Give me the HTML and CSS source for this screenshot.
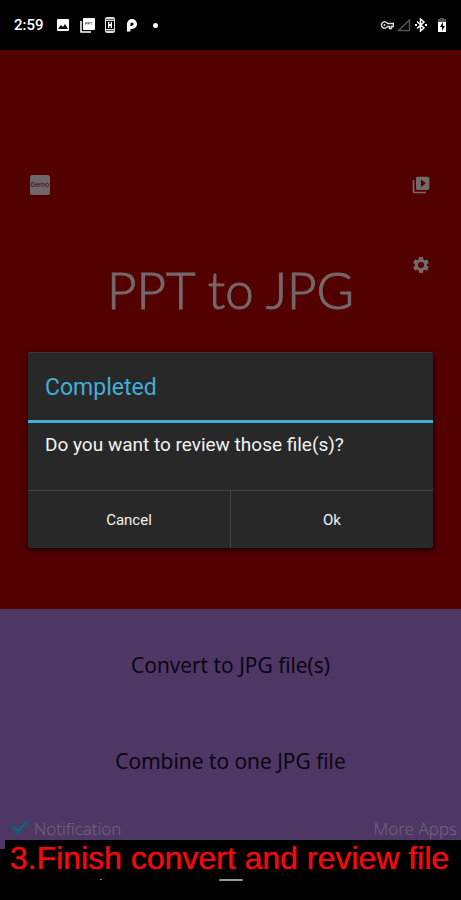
FILE: index.html
```html
<!DOCTYPE html>
<html lang="en">
<head>
	<meta charset="UTF-8">
	<meta name="viewport" content="width=device-width, initial-scale=1.0">
	<title>PPT to JPG</title>
	<link rel="stylesheet" href="styles.css">
</head>
<body>

<!-- Status bar -->
<header class="status-bar">
	<span class="clock">2:59</span>
	<div class="status-left">
		<svg width="14" height="14" viewBox="0 0 14 14"><rect x="1" y="1" width="12" height="12" rx="1" fill="#fff"/><path d="M2 11l3-4 2 2 2-3 3 5z" fill="#000"/></svg>
		<svg width="15" height="15" viewBox="0 0 15 15"><path d="M1 3v11h10" fill="none" stroke="#fff" stroke-width="1.500"/><rect x="3" y="0" width="12" height="12" rx="1" fill="#fff"/><text x="5" y="7" font-size="4" class="mini-text">PPT</text></svg>
		<svg width="10" height="16" viewBox="0 0 10 16"><rect width="10" height="16" rx="2" fill="#ddd"/><path d="M1 2.500h8M1 13.500h8" stroke="#555"/><path d="M1 4h8v8H1z" fill="#000"/><path d="M3 5h1.300v2h1.400V5H7v6H5.700V9H4.300v2H3z" fill="#fff"/></svg>
		<svg width="14" height="14" viewBox="0 0 14 14"><path fill="none" stroke="#fff" stroke-width="3.500" d="M3.700 13.500V6a3.300 3.300 0 1 1 3.300 3.300"/><path d="M5 8h2.500v3H5z" fill="#fff"/></svg>
		<span class="dot"></span>
	</div>
	<div class="status-right">
		<svg width="14" height="10" viewBox="0 0 14 10"><path fill="none" stroke="#ddd" stroke-width="1.5" d="M7.500 3.500a3.200 3.200 0 1 0 0 3h2v2h2v-2h2v-3z"/><circle cx="4.500" cy="5" r="1" fill="#ddd"/></svg>
		<svg width="14" height="14" viewBox="0 0 14 14"><path d="M1.500 12.500h11V2z" fill="none" stroke="#555" stroke-width="1.500"/></svg>
		<svg width="14" height="14" viewBox="0 0 14 14"><path d="M3 3.500l7 6.500-3.500 3V1L10 4 3 10.500" fill="none" stroke="#fff" stroke-width="1.500"/><path d="M1 6h2v2H1zM11 6h2v2h-2z" fill="#fff"/></svg>
		<svg class="battery" width="10" height="15" viewBox="0 0 10 15"><path d="M3 0h4v1h2v3H1V1h2z" fill="#555"/><path d="M1 4h8v10H1z" fill="#fff"/><path d="M6 4L3 9h2v4l3-5H6z" fill="#000"/></svg>
	</div>
</header>

<main class="app">
	<section class="hero">
		<button class="demo-btn">Demo</button>
		<button class="icon-btn video-btn" aria-label="Videos">
			<svg width="20" height="20" viewBox="0 0 24 24"><path d="M4 6H2v14c0 1.100.9 2 2 2h14v-2H4V6zm16-4H8c-1.100 0-2 .9-2 2v12c0 1.100.9 2 2 2h12c1.100 0 2-.9 2-2V4c0-1.100-.9-2-2-2zm-8 12.500v-9l6 4.500-6 4.500z"/></svg>
		</button>
		<h1>PPT to JPG</h1>
		<button class="icon-btn gear-btn" aria-label="Settings">
			<svg width="20" height="20" viewBox="0 0 24 24"><path d="M19.140 12.940c.04-.3.06-.61.06-.94s-.02-.64-.07-.94l2.030-1.580c.18-.14.23-.41.12-.61l-1.920-3.320c-.12-.22-.37-.29-.59-.22l-2.390.96c-.5-.38-1.030-.7-1.620-.94l-.36-2.540c-.04-.24-.24-.41-.48-.41h-3.840c-.24 0-.43.17-.47.41l-.36 2.540c-.59.24-1.130.57-1.620.94l-2.390-.96c-.22-.08-.47 0-.59.22L2.740 8.870c-.12.21-.08.47.12.61l2.030 1.580c-.05.3-.09.63-.09.94s.02.64.07.94l-2.030 1.580c-.18.14-.23.41-.12.61l1.920 3.320c.12.22.37.29.59.22l2.390-.96c.5.38 1.030.7 1.620.94l.36 2.540c.05.24.24.41.48.41h3.840c.24 0 .44-.17.47-.41l.36-2.540c.59-.24 1.130-.56 1.620-.94l2.390.96c.22.08.47 0 .59-.22l1.920-3.320c.12-.22.07-.47-.12-.61l-2.010-1.580zM12 15.600A3.600 3.600 0 1 1 12 8.400a3.600 3.600 0 0 1 0 7.200z"/></svg>
		</button>
	</section>

	<section class="actions">
		<button class="action">Convert to JPG file(s)</button>
		<button class="action">Combine to one JPG file</button>
		<div class="options">
			<label class="notify" for="notification">
				<span class="check">
					<input type="checkbox" id="notification" checked>
					<svg width="20" height="18" viewBox="0 0 20 18"><path d="M0 8l4-2 4 4 8-9 3 1L8 16z" fill="#185870"/><path d="M3 8l5 4L17 2" fill="none" stroke="#207086" stroke-width="1"/></svg>
				</span>
				Notification
			</label>
			<a href="#">More Apps</a>
		</div>
	</section>
</main>

<footer class="nav-bar">
	<span class="nav-back"></span>
	<span class="nav-home"></span>
</footer>

<p class="caption">3.Finish convert and review file</p>

<!-- Completed dialog -->
<div class="overlay">
	<div class="dialog" role="dialog" aria-labelledby="dialogTitle">
		<h2 id="dialogTitle">Completed</h2>
		<p>Do you want to review those file(s)?</p>
		<div class="dialog-buttons">
			<button>Cancel</button>
			<button>Ok</button>
		</div>
	</div>
</div>

</body>
</html>
```
FILE: styles.css
```css
* {
	box-sizing: border-box;
}
body {
	margin: 0;
	min-height: 100vh;
	display: flex;
	flex-direction: column;
	position: relative;
	background-color: #000;
	font-family: Roboto, sans-serif;
}
h1, h2, p {
	margin: 0;
	font-weight: normal;
}
button {
	padding: 0;
	border: none;
	background: none;
	font-family: inherit;
	cursor: pointer;
}
svg {
	display: block;
}
.status-bar {
	height: 50px;
	padding: 0 14px;
	display: flex;
	align-items: center;
	color: #fff;
}
.clock {
	font-size: 15px;
	font-weight: 500;
}
.status-left {
	display: flex;
	align-items: center;
	gap: 10px;
	margin-left: 12px;
}
.mini-text {
	font-family: Roboto, sans-serif;
	fill: #000;
}
.dot {
	width: 5px;
	height: 5px;
	margin-left: 4px;
	border-radius: 50%;
	background-color: #fff;
}
.status-right {
	display: flex;
	align-items: center;
	gap: 3px;
	margin-left: auto;
}
.battery {
	margin-left: 6px;
}
.app {
	flex: 1;
	display: flex;
	flex-direction: column;
	font-family: "Open Sans", sans-serif;
}
.hero {
	flex: 1;
	display: grid;
	grid-template-columns: 20px 1fr 20px;
	grid-template-rows: 20px auto;
	align-content: start;
	row-gap: 60px;
	padding: 125px 30px 0;
	background-color: #520000;
}
.demo-btn {
	border-radius: 2px;
	background-color: #706868;
	color: #520000;
	font-family: Roboto, sans-serif;
	font-size: 7px;
}
.icon-btn {
	grid-column: 3;
	align-self: start;
	fill: #756868;
}
h1 {
	grid-column: 2;
	font-family: Lato, sans-serif;
	font-size: 51px;
	font-weight: 300;
	line-height: 70px;
	text-align: center;
	white-space: nowrap;
	color: #756868;
	-webkit-text-stroke: 1px #756868;
}
.actions {
	display: flex;
	flex-direction: column;
	padding-top: 8px;
	background-color: #4e3665;
}
.action {
	height: 96px;
	font-size: 21px;
	color: #08020d;
}
.options {
	height: 40px;
	padding: 0 4px 2px 10px;
	display: flex;
	align-items: center;
	justify-content: space-between;
	font-size: 17px;
	font-weight: 300;
	color: #776980;
}
.options a {
	color: inherit;
	text-decoration: none;
}
.notify {
	display: flex;
	align-items: center;
	gap: 4px;
}
.check {
	display: grid;
}
.check input, .check svg {
	grid-area: 1 / 1;
	margin: 0;
}
.check input {
	appearance: none;
}
.check svg {
	visibility: hidden;
	pointer-events: none;
}
.check input:checked + svg {
	visibility: visible;
}
.nav-bar {
	height: 51px;
	padding-top: 30px;
	display: grid;
	grid-template-columns: 1fr 24px 1fr;
}
.nav-back {
	width: 2px;
	height: 1px;
	margin-left: 100px;
	background-color: #888;
}
.nav-home {
	height: 2px;
	border-radius: 1px;
	background-color: #999;
}
.caption {
	position: absolute;
	left: 5px;
	right: 0;
	bottom: 21px;
	padding: 0 0 2px 5px;
	background-color: #000;
	font-family: "Liberation Sans", sans-serif;
	font-size: 32px;
	line-height: 37px;
	white-space: nowrap;
	color: #f00b0b;
	text-shadow: 0 0 1px #f00b0b;
}
.overlay {
	position: absolute;
	inset: 0;
	display: flex;
	align-items: center;
	padding: 0 28px;
}
.dialog {
	flex: 1;
	border-top: 1px solid #3a3636;
	border-radius: 2px;
	background-color: #282828;
	box-shadow: 0 2px 6px rgba(0, 0, 0, 0.7);
	color: #f3f3f3;
}
.dialog h2 {
	padding: 2px 17px 0;
	border-bottom: 3px solid #42add9;
	font-size: 23px;
	line-height: 65px;
	color: #42add9;
}
.dialog p {
	height: 67px;
	padding: 8px 17px;
	font-size: 19px;
	line-height: 28px;
}
.dialog-buttons {
	display: flex;
	border-top: 1px solid #444;
}
.dialog-buttons button {
	flex: 1;
	height: 57px;
	font-size: 15px;
	color: #f3f3f3;
}
.dialog-buttons button + button {
	border-left: 1px solid #444;
}
```
